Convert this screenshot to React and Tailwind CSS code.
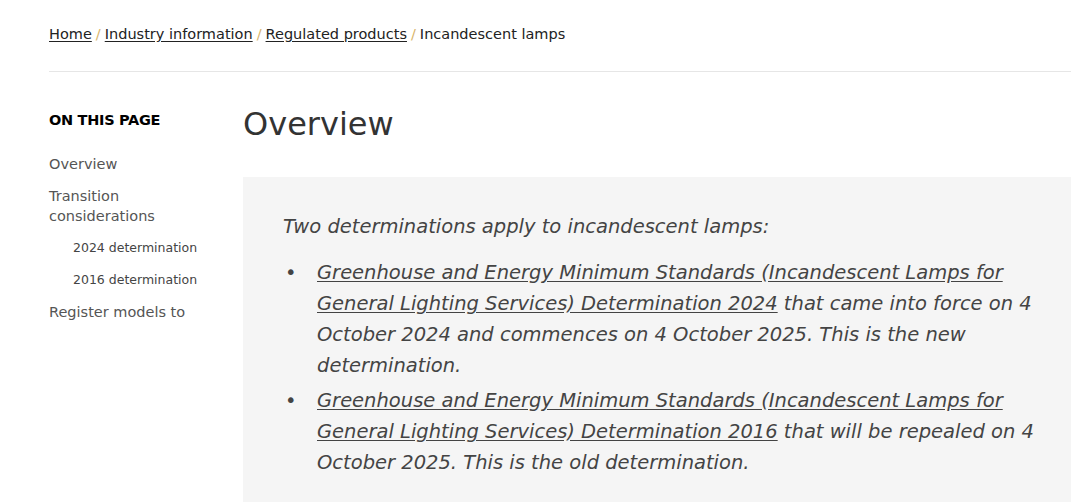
import React from 'react';

const crumbs = ['Home', 'Industry information', 'Regulated products'];

const tocItems = [
  { label: 'Overview', sub: false },
  { label: 'Transition considerations', sub: false },
  { label: '2024 determination', sub: true },
  { label: '2016 determination', sub: true },
  { label: 'Register models to', sub: false },
];

const determinations = [
  {
    title: 'Greenhouse and Energy Minimum Standards (Incandescent Lamps for General Lighting Services) Determination 2024',
    rest: ' that came into force on 4 October 2024 and commences on 4 October 2025. This is the new determination.',
  },
  {
    title: 'Greenhouse and Energy Minimum Standards (Incandescent Lamps for General Lighting Services) Determination 2016',
    rest: ' that will be repealed on 4 October 2025. This is the old determination.',
  },
];

export default function App() {
  return (
    <div className="h-[502px] overflow-hidden bg-white text-[#333] font-['DejaVu_Sans',sans-serif]">
      <div className="pl-[49px] w-[1071px]">
        <nav className="pt-[24px] pb-[27px] text-[14.5px] leading-[20px] text-[#222] border-b border-[#e6e6e6]">
          {crumbs.map((c) => (
            <span key={c}>
              <a href="#" className="underline underline-offset-2">{c}</a>
              <span className="text-[#d9b56a] mx-[4px]">/</span>
            </span>
          ))}
          <span>Incandescent lamps</span>
        </nav>

        <div className="flex pt-[30px]">
          <aside className="w-[194px] shrink-0 pt-[8px]">
            <h2 className="text-[14.5px] font-bold text-black leading-[20px] tracking-[-0.3px]">ON THIS PAGE</h2>
            <ul className="mt-[24px] flex flex-col gap-[12px]">
              {tocItems.map((t) => (
                <li
                  key={t.label}
                  className={
                    t.sub
                      ? 'pl-[24px] text-[12.5px] leading-[20px] text-[#444]'
                      : 'text-[14.5px] leading-[20px] text-[#555] pr-[40px]'
                  }
                >
                  {t.label}
                </li>
              ))}
            </ul>
          </aside>

          <main className="flex-1">
            <h1 className="text-[32px] leading-[44px] text-[#333]">Overview</h1>
            <div className="mt-[31px] bg-[#f5f5f5] pl-[40px] pr-[28px] pt-[34px] pb-[40px] italic text-[19.5px] leading-[31px] text-[#444]">
              <p>Two determinations apply to incandescent lamps:</p>
              <ul className="mt-[15px] flex flex-col gap-[4px]">
                {determinations.map((d) => (
                  <li key={d.title} className="flex">
                    <span className="w-[34px] shrink-0 not-italic pl-[2px]">•</span>
                    <span>
                      <a href="#" className="underline underline-offset-2">{d.title}</a>
                      {d.rest}
                    </span>
                  </li>
                ))}
              </ul>
            </div>
          </main>
        </div>
      </div>
    </div>
  );
}
